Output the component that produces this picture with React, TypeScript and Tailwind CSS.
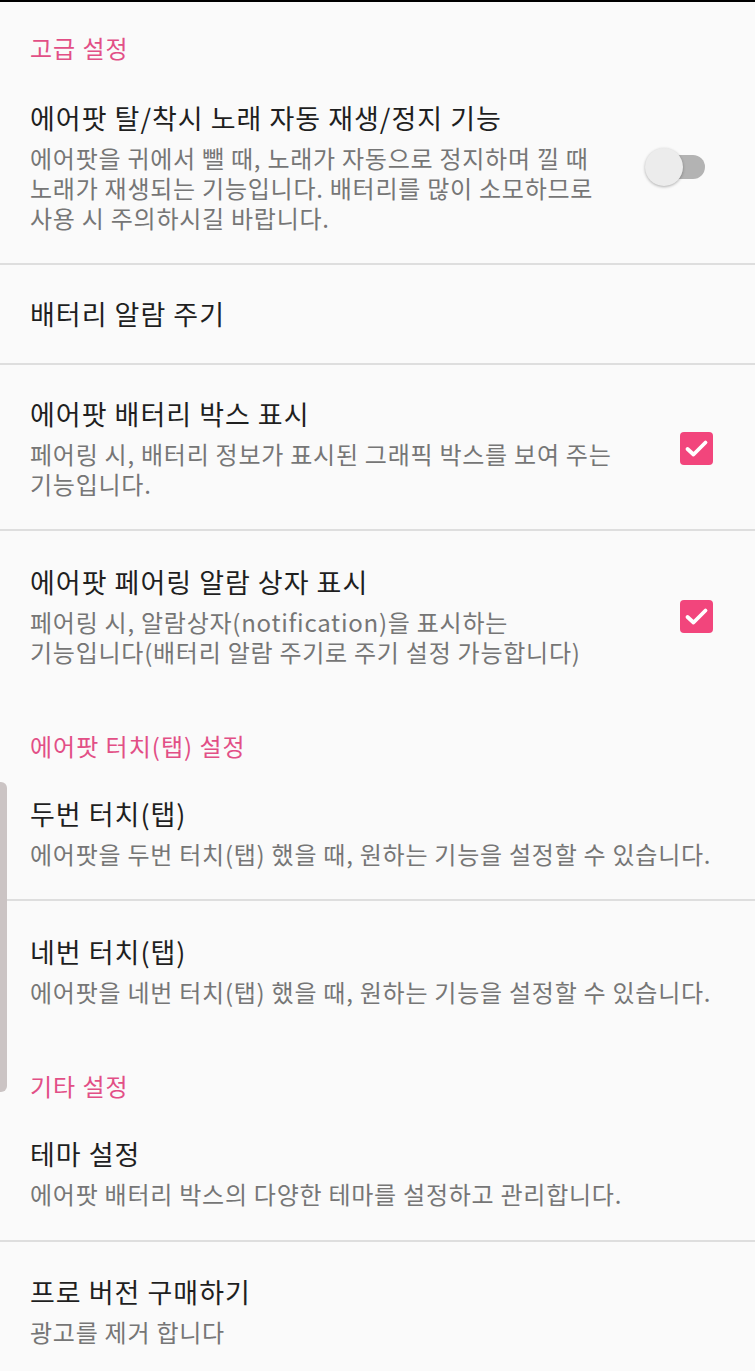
import type { ReactNode } from "react";

const FONT = { fontFamily: '"Noto Sans CJK KR", "Noto Sans", sans-serif' };

function SectionHeader({ children, first }: { children: ReactNode; first?: boolean }) {
  return (
    <div
      className={`px-[30px] text-[24px] leading-[30px] tracking-[1px] text-[#e24f86] ${
        first ? "pt-[31px] pb-[14px]" : "pt-[34px] pb-[12px]"
      }`}
    >
      {children}
    </div>
  );
}

function Switch() {
  return (
    <div className="relative mr-[8px] h-[38px] w-[60px]">
      <div className="absolute top-[7px] right-0 h-[24px] w-[45px] rounded-full bg-[#b3b3b3]" />
      <div className="absolute top-0 left-0 size-[38px] rounded-full bg-[#ececec] shadow-[0_1px_3px_rgba(0,0,0,0.3)]" />
    </div>
  );
}

function Checkbox() {
  return (
    <div className="flex size-[33px] items-center justify-center rounded-[4px] bg-[#f2457c]">
      <svg width="33" height="33" viewBox="0 0 33 33" fill="none">
        <path
          d="M7.5 17 L13.5 22.5 L25.5 10.5"
          stroke="white"
          strokeWidth="3.8"
          strokeLinecap="round"
          strokeLinejoin="round"
        />
      </svg>
    </div>
  );
}

type RowProps = {
  title: string;
  desc?: string;
  widget?: ReactNode;
  divider?: boolean;
  pt: string;
  pb: string;
};

function Row({ title, desc, widget, divider, pt, pb }: RowProps) {
  return (
    <div
      className={`flex items-center pl-[30px] pr-[42px] ${pt} ${pb} ${
        divider ? "border-b-2 border-[#dedede]" : ""
      }`}
    >
      <div className="min-w-0 flex-1 break-keep">
        <div className="text-[27px] leading-[34px] tracking-[1px] text-[#1f1f1f]">{title}</div>
        {desc && (
          <div className="mt-[8px] text-[24px] leading-[30px] tracking-[0.75px] text-[#767676]">
            {desc}
          </div>
        )}
      </div>
      {widget && <div className="flex w-[93px] shrink-0 justify-end">{widget}</div>}
    </div>
  );
}

export default function App() {
  return (
    <div className="relative min-h-screen border-t-2 border-black bg-[#fafafa]" style={FONT}>
      <SectionHeader first>고급 설정</SectionHeader>
      <Row
        title="에어팟 탈/착시 노래 자동 재생/정지 기능"
        desc="에어팟을 귀에서 뺄 때, 노래가 자동으로 정지하며 낄 때 노래가 재생되는 기능입니다. 배터리를 많이 소모하므로 사용 시 주의하시길 바랍니다."
        widget={<Switch />}
        divider
        pt="pt-[24px]"
        pb="pb-[30px]"
      />
      <Row title="배터리 알람 주기" divider pt="pt-[32px]" pb="pb-[32px]" />
      <Row
        title="에어팟 배터리 박스 표시"
        desc="페어링 시, 배터리 정보가 표시된 그래픽 박스를 보여 주는 기능입니다."
        widget={<Checkbox />}
        divider
        pt="pt-[32px]"
        pb="pb-[30px]"
      />
      <Row
        title="에어팟 페어링 알람 상자 표시"
        desc="페어링 시, 알람상자(notification)을 표시하는 기능입니다(배터리 알람 주기로 주기 설정 가능합니다)"
        widget={<Checkbox />}
        pt="pt-[34px]"
        pb="pb-[30px]"
      />

      <SectionHeader>에어팟 터치(탭) 설정</SectionHeader>
      <Row
        title="두번 터치(탭)"
        desc="에어팟을 두번 터치(탭) 했을 때, 원하는 기능을 설정할 수 있습니다."
        divider
        pt="pt-[24px]"
        pb="pb-[30px]"
      />
      <Row
        title="네번 터치(탭)"
        desc="에어팟을 네번 터치(탭) 했을 때, 원하는 기능을 설정할 수 있습니다."
        pt="pt-[34px]"
        pb="pb-[30px]"
      />

      <SectionHeader>기타 설정</SectionHeader>
      <Row
        title="테마 설정"
        desc="에어팟 배터리 박스의 다양한 테마를 설정하고 관리합니다."
        divider
        pt="pt-[24px]"
        pb="pb-[31px]"
      />
      <Row title="프로 버전 구매하기" desc="광고를 제거 합니다" pt="pt-[33px]" pb="pb-[30px]" />

      {/* edge panel handle */}
      <div className="absolute top-[780px] left-0 h-[310px] w-[7px] rounded-r-[6px] bg-[#cbc4c4]" />
    </div>
  );
}
